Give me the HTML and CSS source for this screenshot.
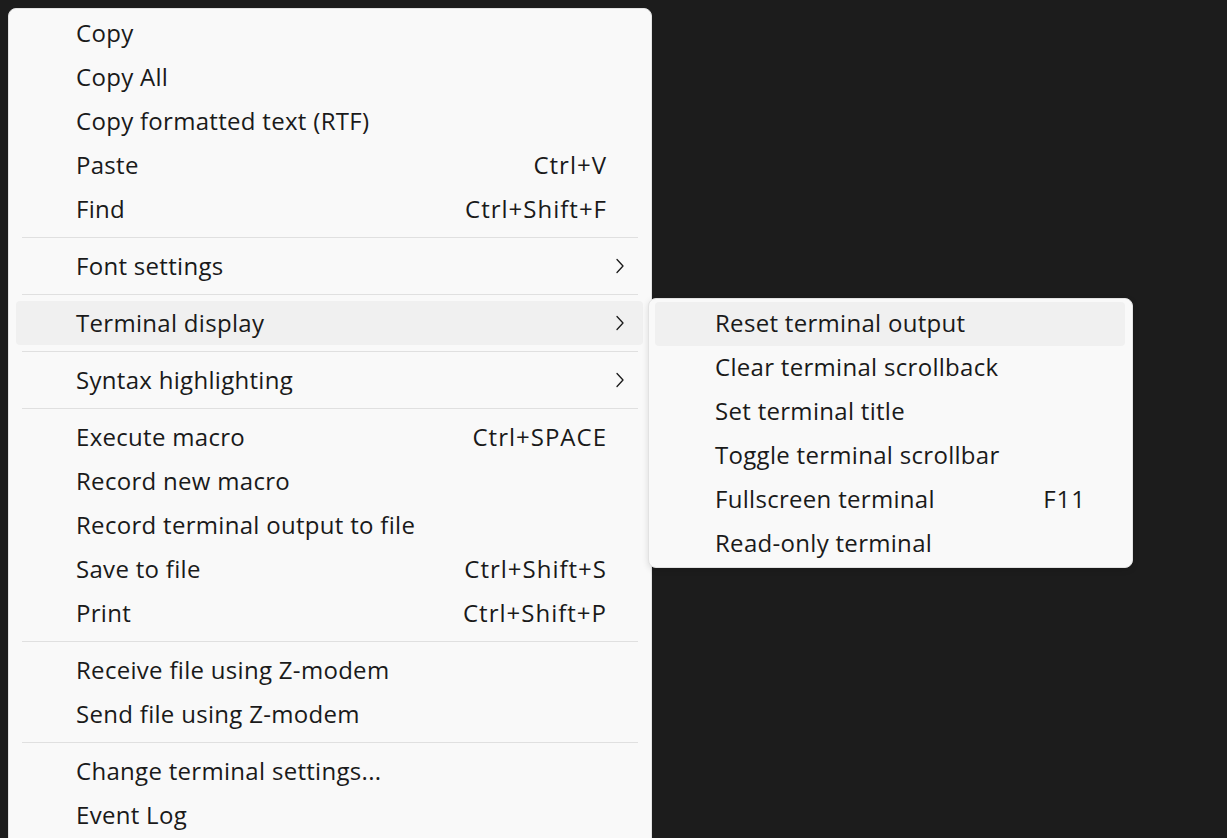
FILE: index.html
```html
<!DOCTYPE html>
<html>
<head>
<meta charset="utf-8">
<link rel="stylesheet" href="styles.css">
</head>
<body>
<div class="stage">
  <div class="menu main">
    <div class="item"><span class="label">Copy</span></div>
    <div class="item"><span class="label">Copy All</span></div>
    <div class="item"><span class="label">Copy formatted text (RTF)</span></div>
    <div class="item"><span class="label">Paste</span><span class="key">Ctrl+V</span></div>
    <div class="item"><span class="label">Find</span><span class="key">Ctrl+Shift+F</span></div>
    <div class="sep"></div>
    <div class="item sub"><span class="label">Font settings</span><span class="chev"><svg width="10" height="16" viewBox="0 0 10 16"><path d="M2 1.5 L8 8 L2 14.5" fill="none" stroke="#1a1a1a" stroke-width="1.3" stroke-linecap="round" stroke-linejoin="round"/></svg></span></div>
    <div class="sep"></div>
    <div class="item sub active"><span class="label">Terminal display</span><span class="chev"><svg width="10" height="16" viewBox="0 0 10 16"><path d="M2 1.5 L8 8 L2 14.5" fill="none" stroke="#1a1a1a" stroke-width="1.3" stroke-linecap="round" stroke-linejoin="round"/></svg></span></div>
    <div class="sep"></div>
    <div class="item sub"><span class="label">Syntax highlighting</span><span class="chev"><svg width="10" height="16" viewBox="0 0 10 16"><path d="M2 1.5 L8 8 L2 14.5" fill="none" stroke="#1a1a1a" stroke-width="1.3" stroke-linecap="round" stroke-linejoin="round"/></svg></span></div>
    <div class="sep"></div>
    <div class="item"><span class="label">Execute macro</span><span class="key">Ctrl+SPACE</span></div>
    <div class="item"><span class="label">Record new macro</span></div>
    <div class="item"><span class="label">Record terminal output to file</span></div>
    <div class="item"><span class="label">Save to file</span><span class="key">Ctrl+Shift+S</span></div>
    <div class="item"><span class="label">Print</span><span class="key">Ctrl+Shift+P</span></div>
    <div class="sep"></div>
    <div class="item"><span class="label">Receive file using Z-modem</span></div>
    <div class="item"><span class="label">Send file using Z-modem</span></div>
    <div class="sep"></div>
    <div class="item"><span class="label">Change terminal settings...</span></div>
    <div class="item"><span class="label">Event Log</span></div>
  </div>
  <div class="menu submenu">
    <div class="item active"><span class="label">Reset terminal output</span></div>
    <div class="item"><span class="label">Clear terminal scrollback</span></div>
    <div class="item"><span class="label">Set terminal title</span></div>
    <div class="item"><span class="label">Toggle terminal scrollbar</span></div>
    <div class="item"><span class="label">Fullscreen terminal</span><span class="key">F11</span></div>
    <div class="item"><span class="label">Read-only terminal</span></div>
  </div>
</div>
</body>
</html>
```
FILE: styles.css
```css
html, body {
  margin: 0;
  padding: 0;
  background: #1c1c1c;
  height: 100%;
  overflow: hidden;
}
.stage {
  position: relative;
  width: 1227px;
  height: 838px;
}
.menu {
  background: #f9f9f9;
  border: 1px solid #e2e2e2;
  border-radius: 8px;
  font-family: "Open Sans", "Noto Sans", sans-serif;
  font-size: 24px;
  letter-spacing: 0.3px;
  color: #1a1a1a;
  box-sizing: border-box;
}
.main {
  position: absolute;
  left: 8px;
  top: 8px;
  width: 644px;
  height: 840px;
  padding: 2px 8px 3px 7px;
}
.submenu {
  position: absolute;
  left: 648px;
  top: 298px;
  width: 485px;
  padding: 3px 7px 1px 6px;
  box-shadow: 0 2px 6px rgba(0,0,0,0.12);
}
.item {
  display: flex;
  align-items: center;
  height: 44px;
  padding-left: 60px;
  padding-right: 36px;
  border-radius: 4px;
}
.label, .key {
  line-height: 44px;
  position: relative;
  top: -1px;
}
.main .label, .main .key {
  top: 0;
}
.item.sub {
  padding-right: 0;
}
.item.active {
  background: #f0f0f0;
}
.label {
  flex: 1;
  white-space: nowrap;
}
.key {
  white-space: nowrap;
  letter-spacing: 1px;
}
.submenu .item {
  padding-right: 39px;
}
.chev {
  width: 36px;
  display: flex;
  align-items: center;
  padding-left: 8px;
  box-sizing: border-box;
}
.chev svg {
  display: block;
}
.sep {
  height: 1px;
  background: #e0e0e0;
  margin: 6px 5px 6px 6px;
}
```
